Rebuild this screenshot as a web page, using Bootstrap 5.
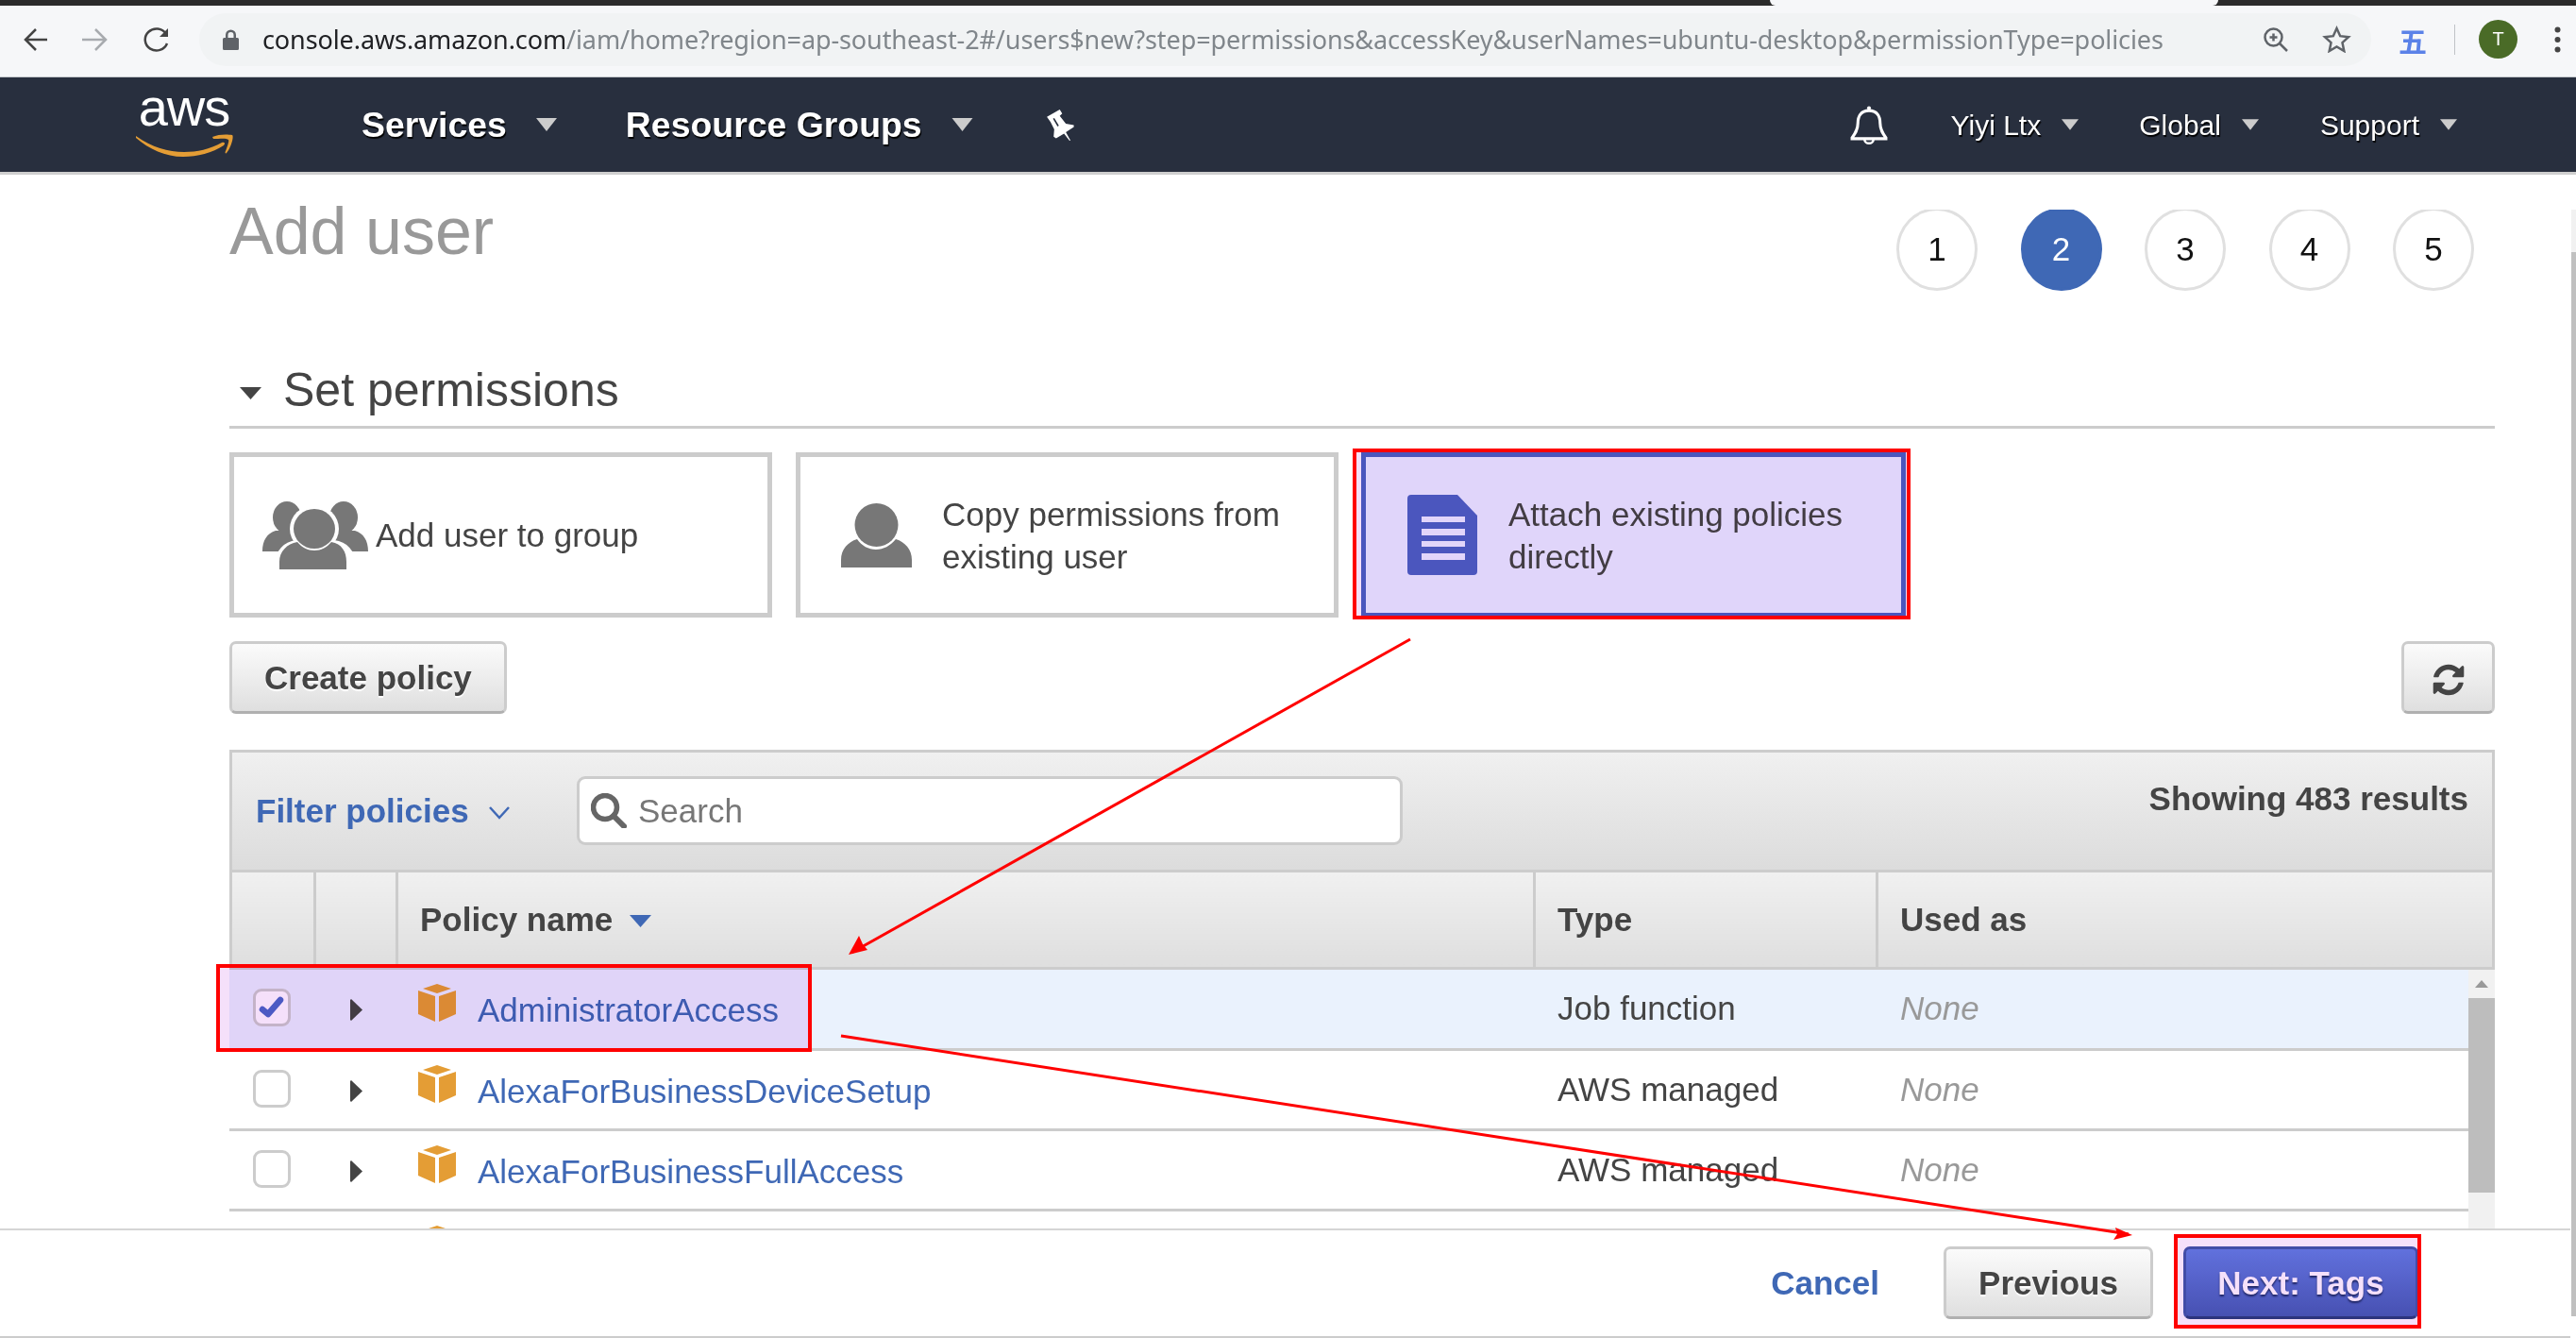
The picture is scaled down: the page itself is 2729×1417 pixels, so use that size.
<!DOCTYPE html>
<html lang="en">
<head>
  <meta charset="UTF-8">
  <meta name="viewport" content="width=device-width, initial-scale=1.0">
  <title>Add user - IAM</title>
  <link href="https://cdn.jsdelivr.net/npm/bootstrap@5.3.3/dist/css/bootstrap.min.css" rel="stylesheet">
  <style>
    html, body { height: 100%; }
    body {
      position: relative;
      width: 2729px;
      height: 1417px;
      overflow: hidden;
      background: #fff;
      color: #444;
      font-family: "Liberation Sans", Arial, sans-serif;
      font-size: 35px;
      line-height: 45px;
    }
    .tab-strip { height: 6px; background: #2b2b2b; }
    .tab-gap { margin-left: 1875px; width: 475px; height: 6px; background: #f6f7f9; border-radius: 0 0 6px 6px; }
    .browser-bar { height: 76px; background: #f6f7f9; border-bottom: 1px solid #c6c9ce; padding-left: 25px; padding-bottom: 4px; }
    .bar-btn { display: block; flex: none; }
    .back-btn { margin-right: 37px; }
    .fwd-btn { margin-right: 38px; }
    .omnibox {
      margin-left: 31px;
      width: 2301px;
      height: 56px;
      border-radius: 28px;
      background: #f1f3f4;
      padding-left: 25px;
      padding-right: 21px;
      flex: none;
    }
    .url-text {
      margin-left: 25px;
      font-family: "Noto Sans", sans-serif;
      font-size: 27px;
      line-height: 56px;
      color: #80868b;
      white-space: nowrap;
      letter-spacing: -.1px;
    }
    .url-text b { font-weight: 400; color: #202124; }
    .zoom-icon { margin-left: auto; }
    .star-icon { margin-left: 36px; }
    .ext-glyph {
      font-family: "Noto Sans CJK SC", sans-serif;
      font-size: 30px;
      line-height: 40px;
      font-weight: 700;
      color: #5b82e8;
      margin-left: 29px;
    }
    .bar-sep { width: 1px; height: 32px; background: #c0c3c7; margin-left: 29px; }
    .avatar {
      width: 41px; height: 41px;
      margin-left: 25px;
      border-radius: 50%;
      background: #4a6b27;
      color: #fff;
      font-size: 20px;
      line-height: 41px;
      text-align: center;
    }
    .dots-icon { margin-left: 39px; }

    .aws-nav {
      height: 103px;
      background: #282f3e;
      border-bottom: 3px solid #cfcfcf;
      padding-left: 143px;
      padding-right: 126px;
      color: #fff;
      text-shadow: 1px 2px 1px #000;
    }
    .aws-logo { width: 104px; height: 80px; position: relative; top: -3px; flex: none; line-height: 1; }
    .aws-word {
      display: block;
      font-size: 56px;
      line-height: 50px;
      text-align: center;
      letter-spacing: -1px;
      text-shadow: none;
      color: #fff;
    }
    .aws-smile { display: block; margin-top: 3px; }
    .nav-main { font-size: 37.400px; font-weight: 700; white-space: nowrap; }
    .nav-side { font-size: 30px; white-space: nowrap; }
    .services-item { margin-left: 136px; }
    .groups-item { margin-left: 73px; }
    .caret-big { margin-left: 31px; flex: none; }
    .caret-small { margin-left: 22px; flex: none; }
    .pin-icon { margin-left: 77px; flex: none; }
    .bell-icon { margin-left: auto; flex: none; }
    .yiyi-item { margin-left: 67px; }
    .global-item { margin-left: 64px; }
    .support-item { margin-left: 65px; }

    .main-area { height: calc(1301px - 185px); overflow: hidden; position: relative; padding-left: 243px; }
    .main-col { width: 2400px; }
    .title-row { height: 195px; }
    .page-title { font-size: 70px; line-height: 80px; color: #999; font-weight: 400; margin: 0; padding-top: 20px; }
    .stepper { gap: 45.500px; margin-top: 37px; margin-right: 22px; height: 86px; overflow: hidden; }
    .step-dot {
      width: 86px; height: 88px;
      margin-top: -2px;
      border: 3px solid #e0e0e0;
      border-radius: 50%;
      color: #111;
      line-height: 82px;
      text-align: center;
      flex: none;
    }
    .step-dot.step-on { background: #3f68b5; border-color: #3f68b5; color: #fff; }
    .section-head {
      height: 74px;
      border-bottom: 3px solid #ccc;
      font-size: 50px;
      line-height: 58px;
      padding-left: 11px;
      padding-top: 4px;
      color: #444;
    }
    .section-head svg { margin-right: 23px; margin-top: 26px; flex: none; }
    .option-row { margin-top: 25px; gap: 25px; }
    .option-box {
      width: 575px;
      height: 175px;
      border: 5px solid #ccc;
      background: #fff;
      flex: none;
    }
    .option-group { padding-left: 30px; }
    .option-group svg { margin-right: 8px; }
    .option-copy { padding-left: 43px; }
    .option-copy svg { margin-right: 32px; }
    .option-attach {
      width: 577px;
      margin-left: -1px;
      background: #eaf3ff;
      border-color: #4e62c2;
      padding-left: 44px;
    }
    .option-attach svg { margin-right: 33px; }
    .action-row { margin-top: 25px; }
    .aws-btn {
      height: 77px;
      padding: 0 34px;
      font-size: 35px;
      line-height: 68px;
      font-weight: 700;
      color: #444;
      text-shadow: 0 2px 1px #fff;
      background: linear-gradient(#fbfbfb, #dfdfdf);
      border: 3px solid #ccc;
      border-bottom-color: #b0b0b0;
      border-radius: 7px;
    }
    .refresh-btn { width: 99px; padding: 0; }
    .policy-panel { margin-top: 38px; width: 2400px; }
    .filter-bar {
      height: 130px;
      background: linear-gradient(#f0f0f0, #dcdcdc);
      border: 3px solid #ccc;
      padding-left: 25px;
    }
    .filter-link { color: #3f68b5; font-weight: 700; width: 340px; flex: none; padding-top: 39px; }
    .filter-link svg { margin-left: 12px; margin-bottom: 2px; }
    .search-box {
      width: 875px;
      height: 73px;
      margin-top: 25px;
      border: 3px solid #ccc;
      border-radius: 9px;
      background: #fff;
      padding-left: 12px;
      color: #777;
      flex: none;
    }
    .search-box svg { margin-right: 12px; }
    .result-count { margin-left: auto; margin-right: 25px; padding-top: 26px; font-weight: 700; }
    .policy-table { table-layout: fixed; width: 100%; margin: 0; }
    .col-check { width: 89px; }
    .col-caret { width: 87px; }
    .col-name { width: 1205px; }
    .col-type { width: 363px; }
    .head-table.table > thead > tr > th {
      height: 101px;
      padding: 0 0 0 23px;
      vertical-align: middle;
      background: linear-gradient(#f0f0f0, #dedede);
      border-right: 3px solid #ccc;
      border-bottom: 3px solid #ccc;
      color: #444;
      font-weight: 700;
    }
    .head-table.table > thead > tr > th:first-child { border-left: 3px solid #ccc; }
    .sort-mark { margin-left: 8px; margin-bottom: 3px; }
    .body-wrap { position: relative; padding-right: 28px; }
    .body-table.table > tbody > tr > td {
      height: 85px;
      padding: 0;
      vertical-align: top;
      border-bottom: 3px solid #ccc;
      background: #fff;
      color: #444;
      box-shadow: none;
    }
    .body-table.table > tbody > tr.row-picked > td { background: #eaf2fd; }
    .body-table.table > tbody > tr.row-last > td { border-bottom: 0; }
    .tick-box {
      display: block;
      width: 40px; height: 40px;
      margin: 20px 0 0 25px;
      border: 3px solid #ccc;
      border-radius: 9px;
      background: #fff;
    }
    .tick-box svg { display: block; }
    .row-caret { display: block; margin: 31px 0 0 39px; }
    .name-cell { padding-left: 24px; }
    .cube-icon { margin-top: 15px; margin-right: 23px; flex: none; }
    .policy-link { color: #3f68b5; text-decoration: none; margin-top: 20px; }
    .text-cell { padding: 18px 0 0 26px; display: block; }
    .text-none { color: #999; font-style: italic; }
    .fake-scroll { position: absolute; top: 0; right: 0; bottom: 0; width: 28px; background: #f1f1f1; }
    .scroll-up { display: block; margin: 11px auto 0; }
    .scroll-thumb { height: 206px; background: #bdbdbd; margin-top: 11px; }
    .page-scroll { position: absolute; top: 222px; right: 0; width: 5px; height: 1172px; background: #f1f1f1; }
    .page-thumb { height: 1127px; margin-top: 45px; background: #c0c0c0; }

    .foot-bar {
      height: 116px;
      background: #fff;
      border-top: 2px solid #d5d5d5;
      border-bottom: 2px solid #ccc;
      margin-right: 6px;
      padding-right: 161px;
      padding-top: 17px;
    }
    .cancel-link { color: #3f68b5; font-weight: 700; text-decoration: none; margin-right: 68px; padding-top: 16px; }
    .prev-btn { width: 222px; padding: 0; }
    .next-btn {
      width: 249px;
      padding: 0;
      margin-left: 32px;
      color: #fff;
      text-shadow: 0 2px 2px #202a66;
      background: linear-gradient(#6580e2, #4a5cb6);
      border-color: #4456ab;
      border-bottom-color: #2e3b80;
    }

    /* red marks drawn on top of the shot */
    .note-box { position: absolute; border: 4px solid #f00; }
    .note-box::before { content: ""; position: absolute; inset: 0; background: #f5e0fa; mix-blend-mode: multiply; }
    .note-attach { left: 1433px; top: 475px; width: 591px; height: 181px; }
    .note-row { left: 229px; top: 1021px; width: 631px; height: 93px; }
    .note-next { left: 2303px; top: 1307px; width: 262px; height: 100px; }
    .arrow-layer { position: absolute; left: 0; top: 0; pointer-events: none; }
  </style>
</head>
<body>

<div class="tab-strip"><div class="tab-gap"></div></div>

<div class="browser-bar d-flex align-items-center">
  <svg class="bar-btn back-btn" width="25" height="26" viewBox="0 0 25 26" fill="none" stroke="#444" stroke-width="2.500"><path d="M25 13H3M13 2 2 13l11 11"/></svg>
  <svg class="bar-btn fwd-btn" width="27" height="26" viewBox="0 0 27 26" fill="none" stroke="#a8abaf" stroke-width="2.500"><path d="M0 13h24M14 2l11 11-11 11"/></svg>
  <svg class="bar-btn" width="28" height="26" viewBox="0 0 28 26" fill="none" stroke="#444" stroke-width="2.500"><path d="M25 17a12 11.500 0 1 1-1-10"/><path d="M26 1v9h-9" fill="#444" stroke="none"/></svg>
  <div class="omnibox d-flex align-items-center">
    <svg class="bar-btn" width="17" height="22" viewBox="0 0 17 22"><path d="M3 9V6a5.500 5.500 0 0 1 11 0v3h1.500A1.500 1.500 0 0 1 17 10.500v10a1.500 1.500 0 0 1-1.500 1.500h-14A1.500 1.500 0 0 1 0 20.500v-10A1.500 1.500 0 0 1 1.500 9zm2.500 0h6V6a3 3 0 0 0-6 0z" fill="#5f6368"/></svg>
    <span class="url-text"><b>console.aws.amazon.com</b>/iam/home?region=ap-southeast-2#/users$new?step=permissions&amp;accessKey&amp;userNames=ubuntu-desktop&amp;permissionType=policies</span>
    <svg class="bar-btn zoom-icon" width="26" height="26" viewBox="0 0 26 26" fill="none" stroke="#5f6368" stroke-width="2.500"><circle cx="10.500" cy="10.500" r="9"/><path d="m17 17 8 8M10.500 6.500v8M6.500 10.500h8"/></svg>
    <svg class="bar-btn star-icon" width="31" height="29" viewBox="0 0 31 29" fill="none" stroke="#5f6368" stroke-width="2.500"><path d="m15.500 3 3.700 8.200 8.800 1-6.500 6 1.800 8.800-7.800-4.500L7.700 27l1.800-8.800-6.500-6 8.800-1z"/></svg>
  </div>
  <span class="ext-glyph">五</span>
  <span class="bar-sep"></span>
  <span class="avatar">T</span>
  <svg class="bar-btn dots-icon" width="7" height="28" viewBox="0 0 7 28" fill="#444"><circle cx="3.500" cy="3.500" r="3"/><circle cx="3.500" cy="14" r="3"/><circle cx="3.500" cy="24.500" r="3"/></svg>
</div>

<nav class="aws-nav d-flex align-items-center">
  <div class="aws-logo">
    <span class="aws-word">aws</span>
    <svg class="aws-smile" width="104" height="24" viewBox="0 0 104 24" fill="#e49d35">
      <path d="M1 2C18 14 35 19 52 19 66 19 79 16 92 9c3-1 4 1 2 3C82 20 66 24 51 24 32 24 15 16 1 4z"/>
      <path d="M82 3c6-3 16-3 21-2 2 1-1 13-6 19-1 1-2 0-1-2 2-5 4-11 3-12-2-2-9-1-16-1z"/>
    </svg>
  </div>
  <span class="nav-main services-item">Services</span>
  <svg class="caret-big" width="22" height="14" viewBox="0 0 22 14"><path d="M0 0h22L11 14z" fill="#ccc"/></svg>
  <span class="nav-main groups-item">Resource Groups</span>
  <svg class="caret-big" width="23" height="14" viewBox="0 0 22 14"><path d="M0 0h22L11 14z" fill="#ccc"/></svg>
  <svg class="pin-icon" width="31" height="35" viewBox="55 28 95 108">
    <path d="M58 55 100 31l8 13-8 8 20 25 26 5v6l-26 17 15 27-3 1-18-23-26 15-8-5 2-24-12-24z" fill="#fff"/>
    <path d="m80 60 15 25" stroke="#282f3e" stroke-width="5" fill="none"/>
  </svg>
  <svg class="bell-icon" width="40" height="41" viewBox="0 0 39 40" fill="none" stroke="#fff" stroke-width="3">
    <path d="M19.500 5C11 5 8 11 8 18c0 7-3 11-6 15v1h35v-1c-3-4-6-8-6-15 0-7-3-13-11.500-13z"/>
    <circle cx="19.500" cy="2.500" r="2" fill="#fff" stroke="none"/>
    <path d="M15 35c0 5 9 5 9 0" stroke-width="2.500"/>
  </svg>
  <span class="nav-side yiyi-item">Yiyi Ltx</span>
  <svg class="caret-small" width="18" height="12" viewBox="0 0 22 14"><path d="M0 0h22L11 14z" fill="#ccc"/></svg>
  <span class="nav-side global-item">Global</span>
  <svg class="caret-small" width="18" height="12" viewBox="0 0 22 14"><path d="M0 0h22L11 14z" fill="#ccc"/></svg>
  <span class="nav-side support-item">Support</span>
  <svg class="caret-small" width="18" height="12" viewBox="0 0 22 14"><path d="M0 0h22L11 14z" fill="#ccc"/></svg>
</nav>

<div class="main-area">
  <div class="main-col">
    <div class="title-row d-flex justify-content-between align-items-start">
      <h1 class="page-title">Add user</h1>
      <div class="stepper d-flex">
        <span class="step-dot">1</span>
        <span class="step-dot step-on">2</span>
        <span class="step-dot">3</span>
        <span class="step-dot">4</span>
        <span class="step-dot">5</span>
      </div>
    </div>

    <div class="section-head d-flex align-items-start">
      <svg width="23" height="13" viewBox="0 0 23 13"><path d="M0 0h23L11.500 13z" fill="#444"/></svg>
      <span>Set permissions</span>
    </div>

    <div class="option-row d-flex">
      <div class="option-box option-group d-flex align-items-center">
        <svg width="112" height="72" viewBox="0 0 112 72">
          <ellipse cx="26" cy="17" rx="15" ry="17" fill="#777"/>
          <ellipse cx="86" cy="17" rx="15" ry="17" fill="#777"/>
          <path d="M0 53c0-12 5-19 14-22h24v22zM112 53c0-12-5-19-14-22H74v22z" fill="#777"/>
          <ellipse cx="55" cy="29" rx="26" ry="25" fill="#fff"/>
          <path d="M14 72V65c0-13 8-22 22-24h40c14 2 22 11 22 24v7z" fill="#fff"/>
          <path d="M18 72v-8c0-11 8-19 19-21 5 6 11 9 18 9s13-3 18-9c11 2 16 10 16 21v8z" fill="#777"/>
          <ellipse cx="55" cy="29" rx="22" ry="21" fill="#777"/>
        </svg>
        <span>Add user to group</span>
      </div>
      <div class="option-box option-copy d-flex align-items-center">
        <svg width="75" height="68" viewBox="0 0 75 68">
          <path d="M0 68V60c0-11 7-19 17-22 5 7 12 11 20 11s15-4 21-11c10 3 17 11 17 22v8z" fill="#777"/>
          <ellipse cx="37.500" cy="23" rx="23" ry="23" fill="#777"/>
        </svg>
        <span>Copy permissions from<br>existing user</span>
      </div>
      <div class="option-box option-attach d-flex align-items-center">
        <svg width="74" height="85" viewBox="0 0 74 85">
          <path d="M4 0h49l21 22v59a4 4 0 0 1-4 4H4a4 4 0 0 1-4-4V4a4 4 0 0 1 4-4z" fill="#4e62c2"/>
          <path d="M15 23h46v6H15zM15 36h46v7H15zM15 49h46v6H15zM15 62h46v7H15z" fill="#ecf3ff"/>
        </svg>
        <span>Attach existing policies<br>directly</span>
      </div>
    </div>

    <div class="action-row d-flex justify-content-between">
      <button type="button" class="btn aws-btn">Create policy</button>
      <button type="button" class="btn aws-btn refresh-btn" aria-label="Refresh">
        <svg width="38" height="38" viewBox="0 0 1792 1792"><path d="M1639 1056q0 5-1 7-64 268-268 434.500t-478 166.500q-146 0-282.500-55t-243.500-157l-129 129q-19 19-45 19t-45-19-19-45v-448q0-26 19-45t45-19h448q26 0 45 19t19 45-19 45l-137 137q71 66 161 102t187 36q134 0 250-65t186-179q11-17 53-117 8-23 30-23h192q13 0 22.500 9.500t9.500 22.500zm25-800v448q0 26-19 45t-45 19h-448q-26 0-45-19t-19-45 19-45l138-138q-148-137-349-137-134 0-250 65t-186 179q-11 17-53 117-8 23-30 23h-199q-13 0-22.500-9.500t-9.500-22.500v-7q65-268 270-434.500t480-166.500q146 0 284 55.500t245 156.500l130-129q19-19 45-19t45 19 19 45z" fill="#444"/></svg>
      </button>
    </div>

    <div class="policy-panel">
      <div class="filter-bar d-flex">
        <div class="filter-link">Filter policies
          <svg width="22" height="14" viewBox="0 0 22 14" fill="none" stroke="#3f68b5" stroke-width="2.500"><path d="m1 1 10 11L21 1"/></svg>
        </div>
        <div class="search-box d-flex align-items-center">
          <svg width="38" height="37" viewBox="0 0 38 37" fill="none" stroke="#666" stroke-width="5.500"><circle cx="15" cy="15" r="12.500"/><path d="m24 24 11 11" stroke-width="6" stroke-linecap="round"/></svg>
          <span>Search</span>
        </div>
        <div class="result-count">Showing 483 results</div>
      </div>

      <table class="table policy-table head-table">
        <colgroup><col class="col-check"><col class="col-caret"><col class="col-name"><col class="col-type"><col></colgroup>
        <thead>
          <tr>
            <th></th>
            <th></th>
            <th>Policy name <svg class="sort-mark" width="23" height="13" viewBox="0 0 23 13"><path d="M0 0h23L11.500 13z" fill="#3f68b5"/></svg></th>
            <th>Type</th>
            <th>Used as</th>
          </tr>
        </thead>
      </table>

      <div class="body-wrap">
        <table class="table policy-table body-table">
          <colgroup><col class="col-check"><col class="col-caret"><col class="col-name"><col class="col-type"><col></colgroup>
          <tbody>
            <tr class="row-picked">
              <td><span class="tick-box"><svg width="34" height="34" viewBox="0 0 34 34"><path d="M7 19l6 5L26 9" fill="none" stroke="#4f66c8" stroke-width="6.500" stroke-linecap="round" stroke-linejoin="round"/></svg></span></td>
              <td><svg class="row-caret" width="13" height="23" viewBox="0 0 13 23"><path d="M0 1v21l1 1L13 11.500 1 0z" fill="#444"/></svg></td>
              <td><div class="name-cell d-flex">
                <svg class="cube-icon" width="40" height="40" viewBox="0 0 40 40"><path d="M20 0l15 5-15 5-15-5zM0 7l18 6v27L0 32zM40 7l-18 6v27l18-8z" fill="#e49d35"/></svg>
                <a href="#" class="policy-link">AdministratorAccess</a>
              </div></td>
              <td><span class="text-cell">Job function</span></td>
              <td><span class="text-cell text-none">None</span></td>
            </tr>
            <tr>
              <td><span class="tick-box"></span></td>
              <td><svg class="row-caret" width="13" height="23" viewBox="0 0 13 23"><path d="M0 1v21l1 1L13 11.500 1 0z" fill="#444"/></svg></td>
              <td><div class="name-cell d-flex">
                <svg class="cube-icon" width="40" height="40" viewBox="0 0 40 40"><path d="M20 0l15 5-15 5-15-5zM0 7l18 6v27L0 32zM40 7l-18 6v27l18-8z" fill="#e49d35"/></svg>
                <a href="#" class="policy-link">AlexaForBusinessDeviceSetup</a>
              </div></td>
              <td><span class="text-cell">AWS managed</span></td>
              <td><span class="text-cell text-none">None</span></td>
            </tr>
            <tr>
              <td><span class="tick-box"></span></td>
              <td><svg class="row-caret" width="13" height="23" viewBox="0 0 13 23"><path d="M0 1v21l1 1L13 11.500 1 0z" fill="#444"/></svg></td>
              <td><div class="name-cell d-flex">
                <svg class="cube-icon" width="40" height="40" viewBox="0 0 40 40"><path d="M20 0l15 5-15 5-15-5zM0 7l18 6v27L0 32zM40 7l-18 6v27l18-8z" fill="#e49d35"/></svg>
                <a href="#" class="policy-link">AlexaForBusinessFullAccess</a>
              </div></td>
              <td><span class="text-cell">AWS managed</span></td>
              <td><span class="text-cell text-none">None</span></td>
            </tr>
            <tr class="row-last">
              <td></td>
              <td></td>
              <td><div class="name-cell d-flex">
                <svg class="cube-icon" width="40" height="40" viewBox="0 0 40 40"><path d="M20 0l15 5-15 5-15-5zM0 7l18 6v27L0 32zM40 7l-18 6v27l18-8z" fill="#e49d35"/></svg>
              </div></td>
              <td></td>
              <td></td>
            </tr>
          </tbody>
        </table>
        <div class="fake-scroll">
          <svg class="scroll-up" width="14" height="8" viewBox="0 0 14 8"><path d="M7 0l7 8H0z" fill="#999"/></svg>
          <div class="scroll-thumb"></div>
        </div>
      </div>
    </div>
  </div>
</div>

<div class="page-scroll"><div class="page-thumb"></div></div>

<div class="foot-bar d-flex justify-content-end">
  <a href="#" class="cancel-link">Cancel</a>
  <button type="button" class="btn aws-btn prev-btn">Previous</button>
  <button type="button" class="btn aws-btn next-btn">Next: Tags</button>
</div>

<div class="note-box note-attach"></div>
<div class="note-box note-row"></div>
<div class="note-box note-next"></div>

<svg class="arrow-layer" width="2729" height="1417" viewBox="0 0 2729 1417" fill="none" stroke="#f00" stroke-width="3">
  <path d="M1494 677 902 1009"/>
  <path d="m899 1011 20-5-5-6-4-9z" fill="#f00" stroke="none"/>
  <path d="M891 1097 2255 1307"/>
  <path d="m2259 1308-18-8 2 7-4 6z" fill="#f00" stroke="none"/>
</svg>

<script src="https://cdn.jsdelivr.net/npm/bootstrap@5.3.3/dist/js/bootstrap.bundle.min.js"></script>
</body>
</html>
